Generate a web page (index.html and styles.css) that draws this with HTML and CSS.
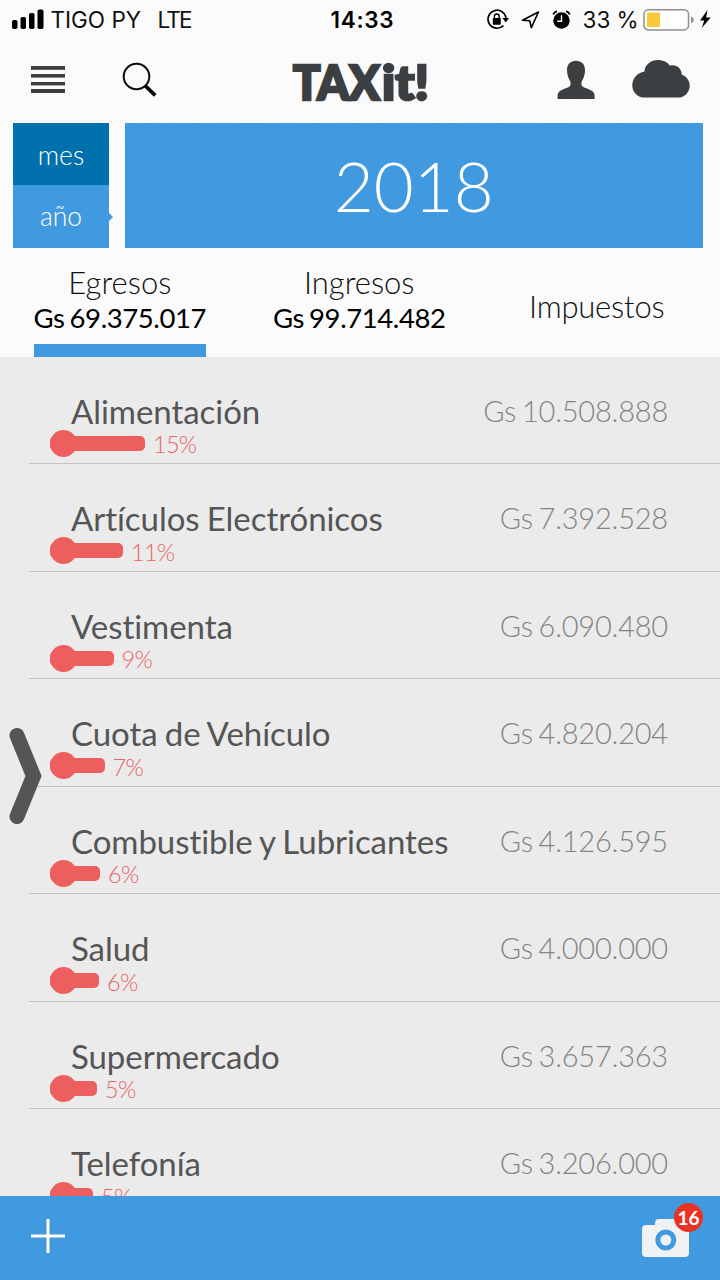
FILE: index.html
```html
<!DOCTYPE html>
<html lang="es">
<head>
    <meta charset="UTF-8">
    <meta name="viewport" content="width=device-width, initial-scale=1.0">
    <title>TAXit!</title>
    <link rel="stylesheet" href="styles.css">
</head>
<body>
    <header>
        <div class="status-bar">
            <svg class="signal" width="32" height="20" viewBox="0 0 32 20">
                <rect x="0" y="11" width="5.5" height="9" rx="1.8"/>
                <rect x="8.5" y="8" width="5.5" height="12" rx="1.8"/>
                <rect x="17" y="4" width="5.5" height="16" rx="1.8"/>
                <rect x="25.5" y="0.5" width="6" height="19.5" rx="1.8"/>
            </svg>
            <span class="carrier">TIGO PY</span>
            <span class="network">LTE</span>
            <span class="clock">14:33</span>
            <svg class="status-icons" width="86" height="22" viewBox="0 0 86 22">
                <!-- rotation lock -->
                <path d="M16.5 16.5 A9 9 0 1 1 19 9.5" fill="none" stroke="#000" stroke-width="1.7"/>
                <path d="M15.5 9h6.5l-3.2 4.6z"/>
                <rect x="5.8" y="9" width="8" height="6.8" rx="0.8"/>
                <path d="M7.4 9.5V7.4a2.4 2.4 0 0 1 4.8 0V9.5" fill="none" stroke="#000" stroke-width="1.4"/>
                <!-- location -->
                <path d="M51.5 3L35.5 11.3l7.2.5 1.6 6.8z" fill="none" stroke="#000" stroke-width="1.6" stroke-linejoin="round"/>
                <!-- alarm -->
                <circle cx="74.5" cy="11.5" r="8.2"/>
                <path d="M66.3 5.6a4.5 4.5 0 0 1 3.7-3.3M82.7 5.6a4.5 4.5 0 0 0-3.7-3.3" fill="none" stroke="#000" stroke-width="1.8"/>
                <path d="M74.5 6.2v6h-4.2" fill="none" stroke="#fff" stroke-width="1.4"/>
            </svg>
            <span class="percent">33 %</span>
            <svg class="battery" width="68" height="24" viewBox="0 0 68 24">
                <rect x="1" y="1.7" width="44.5" height="20.2" rx="4.5" fill="#fff" stroke="#8e8e90" stroke-width="1.5"/>
                <rect x="4" y="4.5" width="13" height="14.5" rx="1" fill="#f9ca3e"/>
                <path d="M48 8.5q2.8.8 2.8 3.3T48 15.1z" fill="#8e8e90"/>
                <path d="M64.5 2L57 12.5h4.3l-2.6 7.5 9-10.5h-4.6z"/>
            </svg>
        </div>

        <nav>
            <svg class="menu" width="36" height="28" viewBox="0 0 36 28" fill="#3b3d40">
                <rect x="1" y="0" width="34" height="3.8"/>
                <rect x="1" y="8" width="34" height="3.6"/>
                <rect x="1" y="16" width="34" height="3.4"/>
                <rect x="1" y="23" width="34" height="4"/>
            </svg>
            <svg class="search" width="36" height="36" viewBox="0 0 36 36" fill="none" stroke="#0a0a0a">
                <circle cx="14.5" cy="14.5" r="12.8" stroke-width="2"/>
                <path d="M23.5 24L33.2 33.4" stroke-width="3.8"/>
            </svg>
            <svg class="logo" width="142" height="64" viewBox="0 0 142 64">
                <text x="5" y="50" textLength="87" lengthAdjust="spacingAndGlyphs">TAX</text>
                <text x="94" y="50" textLength="47" lengthAdjust="spacingAndGlyphs">it!</text>
            </svg>
            <svg class="user" width="38" height="40" viewBox="0 0 38 40" fill="#3b3f42">
                <path d="M19 0.8c-5.6 0-9 3.6-9 9.2 0 3.7.9 7.6 3 11 .8 1.5.9 3.8 0 5C9 29.5 1 29 0.6 35.5V39h37v-3.5C37.2 29 29 29.5 25 26c-.9-1.2-.8-3.5 0-5 2.1-3.4 3-7.3 3-11 0-5.6-3.4-9.2-9-9.2z"/>
            </svg>
            <svg class="cloud" width="58" height="40" viewBox="0 0 58 40" fill="#3b3f42">
                <path d="M10 38.5C4 37 .3 32 .3 26.5 .3 19 5.5 13.500 12.3 12.7 13 5.5 19 1 26 1c5.5 0 9.5 2.3 12 5.7C44 5 49.5 9 49.8 15.7 55 17.5 57.7 22 57.7 26.5c0 6-4 10.5-9 12z"/>
            </svg>
        </nav>

        <div class="period">
            <div class="period-switch">
                <div class="mes">mes</div>
                <div class="anio">año</div>
            </div>
            <div class="year">2018</div>
        </div>

        <div class="tabs">
            <div class="tab egresos active">
                <span class="tab-name">Egresos</span>
                <span class="tab-total">Gs 69.375.017</span>
            </div>
            <div class="tab ingresos">
                <span class="tab-name">Ingresos</span>
                <span class="tab-total">Gs 99.714.482</span>
            </div>
            <div class="tab impuestos">
                <span class="tab-name">Impuestos</span>
            </div>
        </div>
    </header>

    <main>
        <div class="item">
            <div class="item-top"><span class="name">Alimentación</span><span class="amount">Gs 10.508.888</span></div>
            <div class="meter"><div class="bar" style="width: 95px"></div><span>15%</span></div>
        </div>
        <div class="item">
            <div class="item-top"><span class="name">Artículos Electrónicos</span><span class="amount">Gs 7.392.528</span></div>
            <div class="meter"><div class="bar" style="width: 73px"></div><span>11%</span></div>
        </div>
        <div class="item">
            <div class="item-top"><span class="name">Vestimenta</span><span class="amount">Gs 6.090.480</span></div>
            <div class="meter"><div class="bar" style="width: 63.5px"></div><span>9%</span></div>
        </div>
        <div class="item">
            <div class="item-top"><span class="name">Cuota de Vehículo</span><span class="amount">Gs 4.820.204</span></div>
            <div class="meter"><div class="bar" style="width: 54.5px"></div><span>7%</span></div>
        </div>
        <div class="item">
            <div class="item-top"><span class="name">Combustible y Lubricantes</span><span class="amount">Gs 4.126.595</span></div>
            <div class="meter"><div class="bar" style="width: 50px"></div><span>6%</span></div>
        </div>
        <div class="item">
            <div class="item-top"><span class="name">Salud</span><span class="amount">Gs 4.000.000</span></div>
            <div class="meter"><div class="bar" style="width: 49px"></div><span>6%</span></div>
        </div>
        <div class="item">
            <div class="item-top"><span class="name">Supermercado</span><span class="amount">Gs 3.657.363</span></div>
            <div class="meter"><div class="bar" style="width: 47px"></div><span>5%</span></div>
        </div>
        <div class="item">
            <div class="item-top"><span class="name">Telefonía</span><span class="amount">Gs 3.206.000</span></div>
            <div class="meter"><div class="bar" style="width: 43px"></div><span>5%</span></div>
        </div>

        <!-- side panel handle -->
        <svg class="handle" width="34" height="98" viewBox="0 0 34 98">
            <path d="M8 8.5L24.5 49 8 89.5" fill="none" stroke="#555" stroke-width="15" stroke-linecap="round"/>
        </svg>
    </main>

    <footer>
        <svg class="add" width="34" height="34" viewBox="0 0 34 34" stroke="#fff" stroke-width="3">
            <path d="M0 17h34M17 0v34"/>
        </svg>
        <div class="camera">
            <svg width="48" height="40" viewBox="0 0 48 40">
                <path d="M4 7h9V5q0-4 4-4h14q4 0 4 4v2h8q4 0 4 4v24q0 4-4 4H4q-4 0-4-4V11q0-4 4-4z" fill="#f0f1f2"/>
                <circle cx="23.8" cy="22" r="8" fill="none" stroke="#4199e0" stroke-width="5"/>
            </svg>
            <span class="badge">16</span>
        </div>
    </footer>
</body>
</html>
```

FILE: styles.css
```css
body {
    font-family: Lato, sans-serif;
    font-variant-ligatures: none;
    margin: 0;
    width: 720px;
    height: 1280px;
    display: flex;
    flex-direction: column;
    overflow: hidden;
    background-color: #ebebeb;
}

svg {
    display: block;
    flex-shrink: 0;
}

header {
    height: 356.5px;
    flex-shrink: 0;
    background: repeating-linear-gradient(45deg, #fbfbfb 0, #fbfbfb 3px, #f9f9f9 3px, #f9f9f9 5px);
}

.status-bar {
    display: flex;
    align-items: center;
    height: 40px;
    padding-left: 11.5px;
    font-family: Inter, sans-serif;
    font-size: 22.5px;
    white-space: nowrap;
    color: #111;
}

.signal {
    margin-top: -2px;
}

.carrier {
    width: 107px;
    margin-left: 7px;
    margin-top: -1px;
}

.network {
    width: 173px;
    margin-top: -1px;
    letter-spacing: -1.8px;
}

.clock {
    width: 156px;
    margin-top: -1px;
    font-weight: 600;
    letter-spacing: 0.7px;
    color: #000;
}

.status-icons {
    margin-top: -1px;
}

.percent {
    width: 60px;
    margin-left: 10px;
    margin-top: -1px;
}

nav {
    display: flex;
    align-items: center;
    height: 80px;
    padding: 0 30px;
    margin-bottom: 3px;
}

.search {
    margin-left: 56px;
}

.logo {
    margin-left: 130px;
    margin-top: 4px;
}

.logo text {
    font-size: 47px;
    font-weight: 900;
    fill: #3b3f42;
    stroke: #3b3f42;
    stroke-width: 2.5px;
}

.user {
    margin-left: 127px;
}

.cloud {
    margin-left: 37px;
    margin-top: -2px;
}

.period {
    display: flex;
    height: 125px;
    padding: 0 17px 0 13px;
    gap: 15.5px;
    color: white;
    font-weight: 300;
}

.period-switch {
    width: 96px;
    font-size: 26.5px;
    text-align: center;
}

.mes {
    height: 62px;
    line-height: 64px;
    background-color: #0071ad;
}

.anio {
    position: relative;
    height: 63px;
    line-height: 63px;
    background-color: #4199e0;
}

.anio::after {
    content: "";
    position: absolute;
    left: 100%;
    top: 28px;
    border: 4px solid transparent;
    border-left-color: #4199e0;
    border-right: 0;
}

.year {
    flex: 1;
    line-height: 126px;
    font-size: 69px;
    text-align: center;
    background-color: #4199e0;
}

.tabs {
    display: flex;
    height: 108.5px;
    padding-left: 33.5px;
}

.tab {
    box-sizing: border-box;
    display: flex;
    flex-direction: column;
    align-items: center;
    width: 172.5px;
    padding-top: 16px;
    white-space: nowrap;
    color: #111;
}

.tab.active {
    border-bottom: 13px solid #4199e0;
}

.ingresos {
    margin-left: 67px;
}

.impuestos {
    margin-left: 65px;
    padding-top: 40px;
}

.tab-name {
    font-size: 31px;
    line-height: 37px;
    font-weight: 300;
}

.impuestos .tab-name {
    letter-spacing: -0.2px;
}

.tab-total {
    font-size: 27.5px;
    line-height: 34px;
    letter-spacing: -0.4px;
    word-spacing: -1.5px;
    color: #000;
}

main {
    position: relative;
    height: 839px;
    overflow: hidden;
}

.item {
    box-sizing: border-box;
    height: 107.5px;
    margin-left: 29px;
    padding: 33px 52px 0 21px;
    border-bottom: 1px solid #c2c2c4;
}

.item-top {
    display: flex;
    justify-content: space-between;
    height: 40px;
    padding-left: 21px;
    line-height: 42px;
}

.name {
    font-size: 33px;
    letter-spacing: -0.05px;
    word-spacing: -1.2px;
    color: #555;
}

.amount {
    font-size: 29px;
    font-weight: 300;
    line-height: 42px;
    letter-spacing: -0.2px;
    word-spacing: -2px;
    color: #848484;
}

.meter {
    display: flex;
    align-items: center;
    height: 27px;
    font-size: 23.5px;
    font-weight: 300;
    line-height: 27px;
    letter-spacing: -0.7px;
    color: #e96467;
}

.meter span {
    margin: 3px 0 0 8px;
}

.bar {
    position: relative;
    height: 15px;
    border-radius: 5px;
    background-color: #ed5f5e;
}

.bar::before {
    content: "";
    position: absolute;
    left: 0;
    top: -6px;
    width: 27px;
    height: 27px;
    border-radius: 50%;
    background-color: #ed5f5e;
}

.handle {
    position: absolute;
    left: 9px;
    top: 370px;
}

footer {
    display: flex;
    align-items: center;
    justify-content: space-between;
    flex: 1;
    padding: 0 30px 0 31px;
    background-color: #4199e0;
}

.add {
    margin-top: -3px;
}

.camera {
    position: relative;
}

.badge {
    position: absolute;
    right: -13px;
    top: -15px;
    width: 29px;
    height: 29px;
    border-radius: 50%;
    background-color: #eb3323;
    color: white;
    font-size: 19px;
    font-weight: 700;
    line-height: 30px;
    text-align: center;
}
```
